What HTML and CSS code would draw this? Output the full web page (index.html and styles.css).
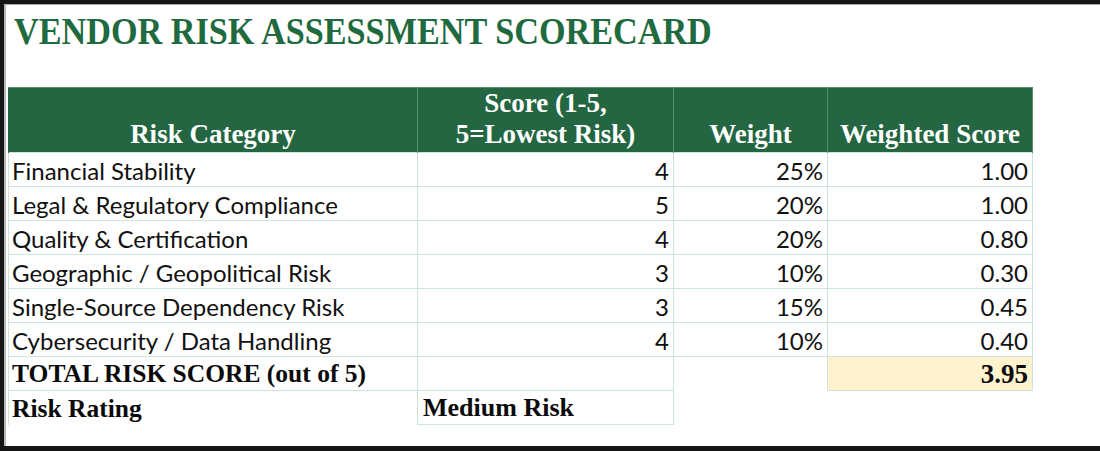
FILE: index.html
```html
<!DOCTYPE html>
<html>
<head>
<meta charset="utf-8">
<link rel="stylesheet" href="styles.css">
</head>
<body>
<div class="screen">
  <div class="sheet">
    <div class="title-row">
      <h1 class="title">VENDOR RISK ASSESSMENT SCORECARD</h1>
    </div>
    <table class="score">
      <colgroup>
        <col class="c1"><col class="c2"><col class="c3"><col class="c4">
      </colgroup>
      <thead>
        <tr class="head">
          <th>Risk Category</th>
          <th>Score (1-5,<br>5=Lowest Risk)</th>
          <th>Weight</th>
          <th>Weighted Score</th>
        </tr>
      </thead>
      <tbody>
        <tr><td class="cat">Financial Stability</td><td class="num">4</td><td class="num">25%</td><td class="num">1.00</td></tr>
        <tr><td class="cat">Legal &amp; Regulatory Compliance</td><td class="num">5</td><td class="num">20%</td><td class="num">1.00</td></tr>
        <tr><td class="cat">Quality &amp; Certification</td><td class="num">4</td><td class="num">20%</td><td class="num">0.80</td></tr>
        <tr><td class="cat">Geographic / Geopolitical Risk</td><td class="num">3</td><td class="num">10%</td><td class="num">0.30</td></tr>
        <tr><td class="cat">Single-Source Dependency Risk</td><td class="num">3</td><td class="num">15%</td><td class="num">0.45</td></tr>
        <tr><td class="cat">Cybersecurity / Data Handling</td><td class="num">4</td><td class="num">10%</td><td class="num">0.40</td></tr>
        <tr class="total"><td class="bold">TOTAL RISK SCORE (out of 5)</td><td class="plain"></td><td class="none"></td><td class="bold num hl big">3.95</td></tr>
        <tr class="rating"><td class="bold">Risk Rating</td><td class="bold plain pad">Medium Risk</td><td class="none"></td><td class="none"></td></tr>
      </tbody>
    </table>
  </div>
</div>
</body>
</html>
```
FILE: styles.css
```css
html, body {
  margin: 0;
  padding: 0;
  background: #ffffff;
}
.screen {
  width: 1100px;
  height: 451px;
  box-sizing: border-box;
  border-top: 4px solid #161616;
  border-left: 4px solid #161616;
  border-bottom: 5px solid #161616;
  overflow: hidden;
}
.sheet {
  height: 100%;
  box-sizing: border-box;
  border-top: 1px solid #a8a8a8;
  border-left: 2px solid #b8b8b8;
  padding-left: 2px;
}
.title-row {
  height: 82px;
  padding: 4px 0 0 6px;
  box-sizing: border-box;
}
.title {
  display: inline-block;
  margin: 0;
  font-family: "Liberation Serif", serif;
  font-weight: bold;
  font-size: 38px;
  line-height: 44px;
  color: #1f6a3e;
  white-space: nowrap;
  transform: scaleX(0.9);
  transform-origin: left center;
}
.score {
  border-collapse: collapse;
  table-layout: fixed;
  width: 1024px;
}
.c1 { width: 409px; }
.c2 { width: 256px; }
.c3 { width: 154px; }
.c4 { width: 205px; }
.head th {
  height: 65px;
  box-sizing: border-box;
  background: #236641;
  color: #ffffff;
  font-family: "Liberation Serif", serif;
  font-weight: bold;
  font-size: 27px;
  line-height: 31px;
  text-align: center;
  vertical-align: bottom;
  padding: 0 4px 2px;
  border-left: 1px solid #5a8d6e;
  border-right: 1px solid #5a8d6e;
  border-top: 1px solid #5a8d6e;
}
.head th:first-child { border-left-color: #236641; }
td {
  height: 34px;
  box-sizing: border-box;
  padding: 0 4px 0 3px;
  vertical-align: bottom;
  border: 1px solid #cfe5d6;
  font-family: "Lato", sans-serif;
  font-size: 24px;
  line-height: 30px;
  color: #111111;
  white-space: nowrap;
}
.num { text-align: right; }
.bold {
  font-family: "Liberation Serif", serif;
  font-weight: bold;
  font-size: 25.5px;
  padding-bottom: 1px;
  color: #0a0a0a;
}
.big { font-size: 27px; }
.pad { padding-left: 5px; font-size: 26px; }
.hl { background: #fff2cf; }
td.none { border: none; }
.total td.none { border-top: 1px solid #cfe5d6; }
.rating td:first-child { border-bottom: none; }
```
